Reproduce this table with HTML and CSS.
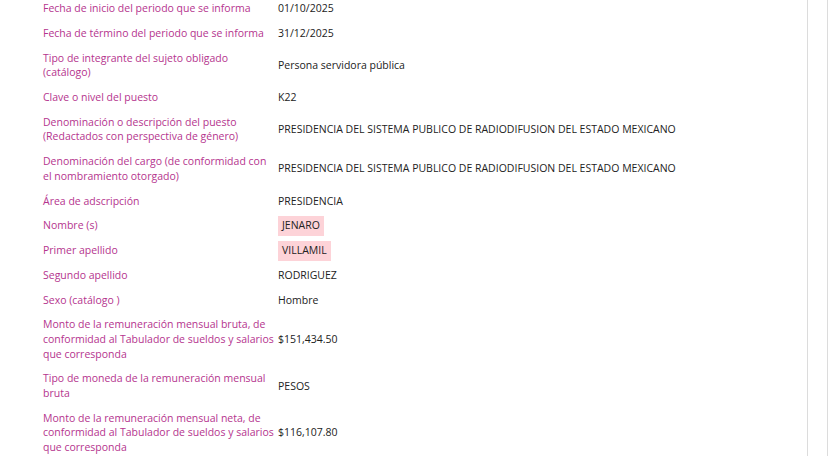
FILE: index.html
```html
<!DOCTYPE html>
<html lang="es">
<head>
<meta charset="utf-8">
<title>Detalle</title>
<link rel="stylesheet" href="styles.css">
</head>
<body>
<div class="page">
  <main class="content">
    <div class="table">
      <div class="row"><div class="label">Fecha de inicio del periodo que se informa</div><div class="value">01/10/2025</div></div>
      <div class="row"><div class="label">Fecha de término del periodo que se informa</div><div class="value">31/12/2025</div></div>
      <div class="row"><div class="label">Tipo de integrante del sujeto obligado (catálogo)</div><div class="value">Persona servidora pública</div></div>
      <div class="row"><div class="label">Clave o nivel del puesto</div><div class="value">K22</div></div>
      <div class="row"><div class="label">Denominación o descripción del puesto (Redactados con perspectiva de género)</div><div class="value">PRESIDENCIA DEL SISTEMA PUBLICO DE RADIODIFUSION DEL ESTADO MEXICANO</div></div>
      <div class="row"><div class="label">Denominación del cargo (de conformidad con el nombramiento otorgado)</div><div class="value">PRESIDENCIA DEL SISTEMA PUBLICO DE RADIODIFUSION DEL ESTADO MEXICANO</div></div>
      <div class="row"><div class="label">Área de adscripción</div><div class="value">PRESIDENCIA</div></div>
      <div class="row"><div class="label">Nombre (s)</div><div class="value"><span class="mark">JENARO</span></div></div>
      <div class="row"><div class="label">Primer apellido</div><div class="value"><span class="mark">VILLAMIL</span></div></div>
      <div class="row"><div class="label">Segundo apellido</div><div class="value">RODRIGUEZ</div></div>
      <div class="row"><div class="label">Sexo (catálogo )</div><div class="value">Hombre</div></div>
      <div class="row"><div class="label">Monto de la remuneración mensual bruta, de conformidad al Tabulador de sueldos y salarios que corresponda</div><div class="value">$151,434.50</div></div>
      <div class="row"><div class="label">Tipo de moneda de la remuneración mensual bruta</div><div class="value">PESOS</div></div>
      <div class="row"><div class="label">Monto de la remuneración mensual neta, de conformidad al Tabulador de sueldos y salarios que corresponda</div><div class="value">$116,107.80</div></div>
    </div>
  </main>
  <div class="rail"></div>
</div>
</body>
</html>
```
FILE: styles.css
```css
html, body {
  margin: 0;
  padding: 0;
  background: #ffffff;
  overflow: hidden;
}
body {
  font-family: "Open Sans", "Noto Sans", "DejaVu Sans", sans-serif;
  font-size: 10.5px;
  color: #222222;
}
.page {
  display: flex;
  height: 456px;
}
.content {
  width: 808px;
  border-right: 1px solid #dcdcdc;
  padding-left: 43px;
  box-sizing: border-box;
}
.rail {
  width: 19px;
  border-right: 1px solid #dcdcdc;
}
.table {
  margin-top: -4px;
}
.row {
  display: grid;
  grid-template-columns: 235px 1fr;
  align-items: center;
  padding: 5.1px 0;
  line-height: 14.6px;
}
.label {
  color: #b5348e;
  padding-right: 2px;
}
.value {
  color: #222222;
}
.mark {
  display: inline-block;
  background: #fdd3d8;
  padding: 2px 4px 3px 4px;
  margin: -3px 0;
}
```
